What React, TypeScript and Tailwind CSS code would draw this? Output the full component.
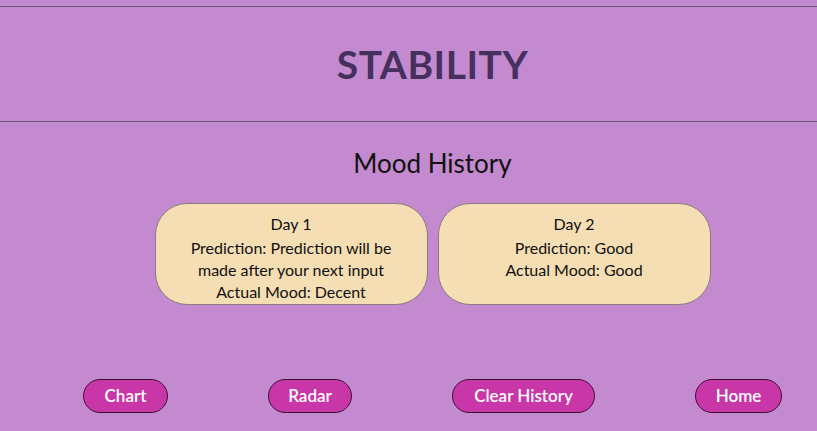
import type { FC } from "react";

type Entry = {
    day: number;
    prediction: string;
    actual: string;
};

const history: Entry[] = [
    { day: 1, prediction: "Prediction will be made after your next input", actual: "Decent" },
    { day: 2, prediction: "Good", actual: "Good" },
];

const NavButton: FC<{ label: string; width: string }> = ({ label, width }) => (
    <button className={`${width} h-[34px] rounded-[17px] bg-[#c936a8] border border-[#3a1233] text-white font-semibold text-[17px]`}>
        {label}
    </button>
);

export default function App() {
    return (
        <div
            className="min-h-[431px] bg-[#c38acf] pt-[6px] text-[#111]"
            style={{ fontFamily: "Lato, 'Open Sans', sans-serif" }}
        >
            <header className="border-y border-[#6a5a78] h-[116px] flex items-center justify-center pl-[48px]">
                <h1 className="text-[39px] font-bold text-[#45305e] tracking-[0.5px]">STABILITY</h1>
            </header>

            <main className="pl-[48px] flex flex-col items-center">
                <h2 className="mt-[24px] text-[26px] leading-[34px]">Mood History</h2>

                <div className="mt-[23px] flex gap-[10px]">
                    {history.map((entry) => (
                        <div
                            key={entry.day}
                            className="w-[273px] h-[102px] rounded-[32px] bg-[#f5deb3] border border-[#8b7b80] px-[24px] pt-[9px] text-center text-[16px] leading-[22px]"
                        >
                            <div className="mb-[2px]">Day {entry.day}</div>
                            <div>Prediction: {entry.prediction}</div>
                            <div>Actual Mood: {entry.actual}</div>
                        </div>
                    ))}
                </div>

                <div className="mt-[74px] flex gap-[100px]">
                    <NavButton label="Chart" width="w-[85px]" />
                    <NavButton label="Radar" width="w-[84px]" />
                    <NavButton label="Clear History" width="w-[143px]" />
                    <NavButton label="Home" width="w-[87px]" />
                </div>
            </main>
        </div>
    );
}
